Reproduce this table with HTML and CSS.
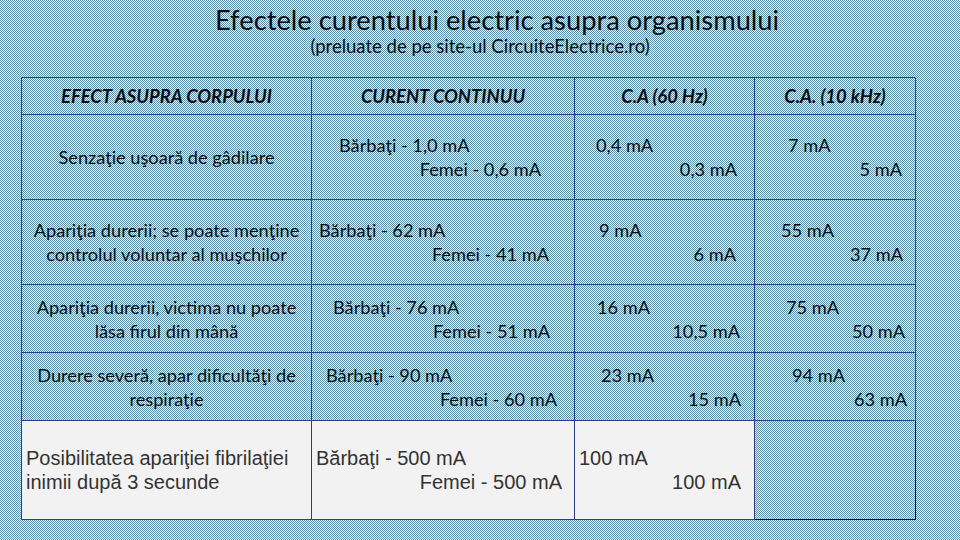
FILE: index.html
```html
<!DOCTYPE html>
<html lang="ro">
<head>
<meta charset="utf-8">
<title>Efectele curentului electric asupra organismului</title>
<link rel="stylesheet" href="styles.css">
</head>
<body>
<svg class="bg" width="960" height="540" aria-hidden="true">
  <defs>
    <pattern id="checker" width="2" height="2" patternUnits="userSpaceOnUse">
      <rect x="0" y="0" width="2" height="2" fill="#e8f1f3"/>
      <rect x="0" y="0" width="1" height="1" fill="#5c8ea7"/>
      <rect x="1" y="1" width="1" height="1" fill="#5c8ea7"/>
    </pattern>
  </defs>
  <rect width="960" height="540" fill="url(#checker)" shape-rendering="crispEdges"/>
</svg>
<div class="slide">
  <h1 class="title">Efectele curentului electric asupra organismului</h1>
  <p class="subtitle">(preluate de pe site-ul CircuiteElectrice.ro)</p>
  <div class="grid">
    <div class="cell head">EFECT ASUPRA CORPULUI</div>
    <div class="cell head">CURENT CONTINUU</div>
    <div class="cell head">C.A (60 Hz)</div>
    <div class="cell head">C.A. (10 kHz)</div>

    <div class="cell effect r1"><span>Senzaţie uşoară de gâdilare</span></div>
    <div class="cell val r1 c2"><span class="a">Bărbaţi - 1,0 mA</span><span class="b">Femei - 0,6 mA</span></div>
    <div class="cell val r1 c3"><span class="a">0,4 mA</span><span class="b">0,3 mA</span></div>
    <div class="cell val r1 c4"><span class="a">7 mA</span><span class="b">5 mA</span></div>

    <div class="cell effect r2"><span>Apariţia durerii; se poate menţine</span><span>controlul voluntar al muşchilor</span></div>
    <div class="cell val r2 c2"><span class="a">Bărbaţi - 62 mA</span><span class="b">Femei - 41 mA</span></div>
    <div class="cell val r2 c3"><span class="a">9 mA</span><span class="b">6 mA</span></div>
    <div class="cell val r2 c4"><span class="a">55 mA</span><span class="b">37 mA</span></div>

    <div class="cell effect r3"><span>Apariţia durerii, victima nu poate</span><span>lăsa firul din mână</span></div>
    <div class="cell val r3 c2"><span class="a">Bărbaţi - 76 mA</span><span class="b">Femei - 51 mA</span></div>
    <div class="cell val r3 c3"><span class="a">16 mA</span><span class="b">10,5 mA</span></div>
    <div class="cell val r3 c4"><span class="a">75 mA</span><span class="b">50 mA</span></div>

    <div class="cell effect r4"><span>Durere severă, apar dificultăţi de</span><span>respiraţie</span></div>
    <div class="cell val r4 c2"><span class="a">Bărbaţi - 90 mA</span><span class="b">Femei - 60 mA</span></div>
    <div class="cell val r4 c3"><span class="a">23 mA</span><span class="b">15 mA</span></div>
    <div class="cell val r4 c4"><span class="a">94 mA</span><span class="b">63 mA</span></div>

    <div class="cell effect last r5"><span>Posibilitatea apariţiei fibrilaţiei</span><span>inimii după 3 secunde</span></div>
    <div class="cell val last r5 c2"><span class="a">Bărbaţi - 500 mA</span><span class="b">Femei - 500 mA</span></div>
    <div class="cell val last r5 c3"><span class="a">100 mA</span><span class="b">100 mA</span></div>
    <div class="cell empty r5 c4"></div>
  </div>
</div>
</body>
</html>
```
FILE: styles.css
```css
html, body {
  margin: 0;
  padding: 0;
}
body {
  position: relative;
  width: 960px;
  height: 540px;
  overflow: hidden;
  background: #a2c0ce;
  font-family: Lato, "Open Sans", sans-serif;
  color: #0d0d0d;
}
.bg {
  position: absolute;
  top: 0;
  left: 0;
  z-index: 0;
}
.slide {
  position: relative;
  z-index: 1;
  display: flex;
  flex-direction: column;
  width: 960px;
  height: 540px;
}
.title {
  margin: 4px 0 0;
  padding-left: 34px;
  height: 31px;
  line-height: 31px;
  font-size: 27.3px;
  font-weight: 400;
  text-align: center;
}
.subtitle {
  margin: 0;
  height: 22px;
  line-height: 22px;
  font-size: 18.5px;
  text-align: center;
}
.grid {
  margin: 20px 0 0 21px;
  width: 893px;
  display: grid;
  grid-template-columns: 290px 263px 180px 161px;
  grid-template-rows: 37px 85px 85px 68px 68px 99px;
  border-top: 1px solid #2c3f8f;
  border-left: 1px solid #2c3f8f;
}
.cell {
  box-sizing: border-box;
  border-right: 1px solid #2c3f8f;
  border-bottom: 1px solid #2c3f8f;
  display: flex;
  flex-direction: column;
  justify-content: center;
  font-size: 18.2px;
  line-height: 24px;
  white-space: nowrap;
}
.head {
  align-items: center;
  font-weight: 700;
  font-style: italic;
  font-size: 18.4px;
}
.effect {
  align-items: center;
}
.val .a {
  align-self: flex-start;
}
.val .b {
  align-self: flex-end;
}
.last {
  background: #f2f2f2;
  font-family: "Liberation Sans", Arial, sans-serif;
  font-size: 20px;
  color: #333;
}
.effect.last {
  align-items: flex-start;
  padding-left: 4px;
}
.empty {
  border-right-color: #111;
  border-bottom-color: #111;
}

/* offsets of the two value lines inside each cell */
.r1.c2 .a { padding-left: 27px; } .r1.c2 .b { padding-right: 33px; }
.r2.c2 .a { padding-left: 7px; }  .r2.c2 .b { padding-right: 25px; }
.r3.c2 .a { padding-left: 21px; } .r3.c2 .b { padding-right: 24px; }
.r4.c2 .a { padding-left: 14px; } .r4.c2 .b { padding-right: 17px; }
.r5.c2 .a { padding-left: 4px; }  .r5.c2 .b { padding-right: 12px; }

.r1.c3 .a { padding-left: 21px; } .r1.c3 .b { padding-right: 17px; }
.r2.c3 .a { padding-left: 24px; } .r2.c3 .b { padding-right: 18px; }
.r3.c3 .a { padding-left: 22px; } .r3.c3 .b { padding-right: 14px; }
.r4.c3 .a { padding-left: 26px; } .r4.c3 .b { padding-right: 13px; }
.r5.c3 .a { padding-left: 4px; }  .r5.c3 .b { padding-right: 13px; }

.r1.c4 .a { padding-left: 33px; } .r1.c4 .b { padding-right: 13px; }
.r2.c4 .a { padding-left: 26px; } .r2.c4 .b { padding-right: 12px; }
.r3.c4 .a { padding-left: 31px; } .r3.c4 .b { padding-right: 10px; }
.r4.c4 .a { padding-left: 37px; } .r4.c4 .b { padding-right: 8px; }
```
